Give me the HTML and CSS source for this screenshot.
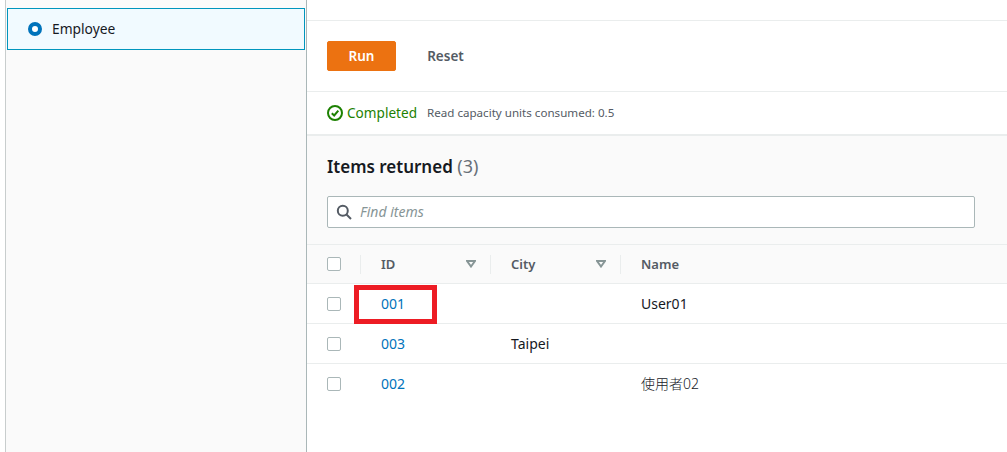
FILE: index.html
```html
<!DOCTYPE html>
<html lang="en">
<head>
<meta charset="utf-8">
<title>Items returned</title>
<link rel="stylesheet" href="styles.css">
</head>
<body>
<div class="page">
  <aside class="sidebar">
    <div class="option">
      <span class="radio"></span>
      <span class="option-label">Employee</span>
    </div>
  </aside>
  <main class="main">
    <div class="top-spacer"></div>
    <div class="actions">
      <button class="btn-run" type="button">Run</button>
      <button class="btn-reset" type="button">Reset</button>
    </div>
    <div class="status">
      <svg class="status-icon" width="16" height="16" viewBox="0 0 16 16" fill="none" stroke="#1d8102" stroke-width="2"><circle cx="8" cy="8" r="7"/><path d="M4.8 8.2 7.2 10.5 11.3 5.6"/></svg>
      <span class="status-text">Completed</span>
      <span class="status-note">Read capacity units consumed: 0.5</span>
    </div>
    <section class="results">
      <div class="results-head">
        <h2 class="title">Items returned <span class="count">(3)</span></h2>
        <div class="search">
          <svg width="16" height="16" viewBox="0 0 16 16" fill="none" stroke="#545b64" stroke-width="2"><circle cx="6.8" cy="6.8" r="5"/><path d="M10.5 10.5 15 15"/></svg>
          <span class="placeholder">Find items</span>
        </div>
      </div>
      <div class="row header">
        <div class="cell-check"><span class="checkbox"></span></div>
        <div class="cell col-id head-cell"><span>ID</span><svg class="sort" width="10" height="8" viewBox="0 0 10 8" fill="none" stroke="#879596" stroke-width="2"><path d="M1 1H9L5 6.5Z"/></svg></div>
        <div class="cell col-city head-cell"><span>City</span><svg class="sort" width="10" height="8" viewBox="0 0 10 8" fill="none" stroke="#879596" stroke-width="2"><path d="M1 1H9L5 6.5Z"/></svg></div>
        <div class="cell col-name head-cell"><span>Name</span></div>
      </div>
      <div class="row">
        <div class="cell-check"><span class="checkbox"></span></div>
        <div class="cell col-id"><a class="link">001</a></div>
        <div class="cell col-city"></div>
        <div class="cell col-name">User01</div>
      </div>
      <div class="row">
        <div class="cell-check"><span class="checkbox"></span></div>
        <div class="cell col-id"><a class="link">003</a></div>
        <div class="cell col-city">Taipei</div>
        <div class="cell col-name"></div>
      </div>
      <div class="row last">
        <div class="cell-check"><span class="checkbox"></span></div>
        <div class="cell col-id"><a class="link">002</a></div>
        <div class="cell col-city"></div>
        <div class="cell col-name cjk">使用者02</div>
      </div>
    </section>
  </main>
  <div class="highlight"></div>
</div>
</body>
</html>
```
FILE: styles.css
```css
* { box-sizing: border-box; }
html, body { margin: 0; padding: 0; }
body {
  width: 1007px;
  height: 452px;
  overflow: hidden;
  background: #fff;
  color: #16191f;
  font-family: "Noto Sans", "Noto Sans CJK TC", sans-serif;
  font-size: 14px;
}
.page {
  position: relative;
  display: flex;
  height: 452px;
}
.sidebar {
  width: 302px;
  margin-left: 5px;
  flex: none;
  background: #fafafa;
  border-left: 1px solid #c8cdcd;
  border-right: 1px solid #aab7b8;
  padding: 8px 1px 0 1px;
}
.option {
  display: flex;
  align-items: center;
  gap: 10px;
  height: 42px;
  padding-left: 20px;
  background: #f1faff;
  border: 1px solid #0095bd;
  color: #16191f;
  font-size: 13.8px;
}
.option-label { margin-bottom: 2px; }
.radio {
  width: 14px;
  height: 14px;
  border-radius: 50%;
  border: 4px solid #0073bb;
  background: #fff;
}
.main {
  flex: 1;
  min-width: 0;
  display: flex;
  flex-direction: column;
}
.top-spacer {
  height: 21px;
  border-bottom: 1px solid #eaeded;
}
.actions {
  height: 71px;
  padding: 20px 0 0 20px;
  display: flex;
  align-items: flex-start;
  border-bottom: 1px solid #eaeded;
}
.btn-run {
  width: 69px;
  height: 30px;
  background: #ec7211;
  border: 1px solid #ec7211;
  border-radius: 2px;
  color: #fff;
  font: 600 13.5px "Noto Sans", sans-serif;
  padding: 0;
}
.btn-reset {
  width: 69px;
  height: 30px;
  margin-left: 15px;
  background: none;
  border: none;
  color: #545b64;
  font: 600 13.5px "Noto Sans", sans-serif;
  padding: 0;
}
.status {
  height: 44px;
  padding: 0 0 1px 20px;
  display: flex;
  align-items: center;
  border-bottom: 2px solid #eaeded;
}
.status-icon { flex: none; }
.status-text { margin-left: 4px; color: #1d8102; font-size: 13.6px; }
.status-note { margin-left: 10px; color: #545b64; font-size: 11.6px; }
.results { flex: 1; }
.results-head {
  height: 109px;
  padding: 0 32px 0 20px;
  background: #fafafa;
  border-bottom: 1px solid #eaeded;
}
.title {
  margin: 0;
  padding-top: 18px;
  height: 60px;
  font-size: 17px;
  line-height: 25px;
  font-weight: 600;
}
.count { font-weight: 400; color: #687078; font-size: 18px; }
.search {
  display: flex;
  align-items: center;
  gap: 8px;
  height: 32px;
  padding: 0 0 2px 8px;
  background: #fff;
  border: 1px solid #aab7b8;
  border-radius: 2px;
}
.search svg { margin-top: 2px; }
.placeholder { color: #879596; font-style: italic; font-size: 14px; }
.row {
  display: flex;
  align-items: center;
  height: 40px;
  border-bottom: 1px solid #eaeded;
}
.row.last { border-bottom-color: transparent; }
.row.header {
  height: 39px;
  background: #fafafa;
  color: #545b64;
  font-weight: 600;
  font-size: 13px;
}
.cell-check { width: 53px; padding-left: 20px; flex: none; display: flex; }
.checkbox {
  width: 14px;
  height: 14px;
  background: #fff;
  border: 1px solid #aab7b8;
  border-radius: 2px;
}
.cell { flex: none; padding-left: 21px; height: 100%; display: flex; align-items: center; }
.col-id, .col-city { width: 130px; }
.col-name { flex: 1; }
.cjk { padding-bottom: 2px; font-weight: 300; }
.head-cell { height: 19px; padding-left: 20px; border-left: 1px solid #eaeded; justify-content: space-between; padding-right: 14px; padding-bottom: 1px; }
.sort { display: block; }
.link { color: #0073bb; }
.highlight {
  position: absolute;
  left: 354px;
  top: 285px;
  width: 83px;
  height: 39px;
  border: 5px solid #ed1c24;
}
```
